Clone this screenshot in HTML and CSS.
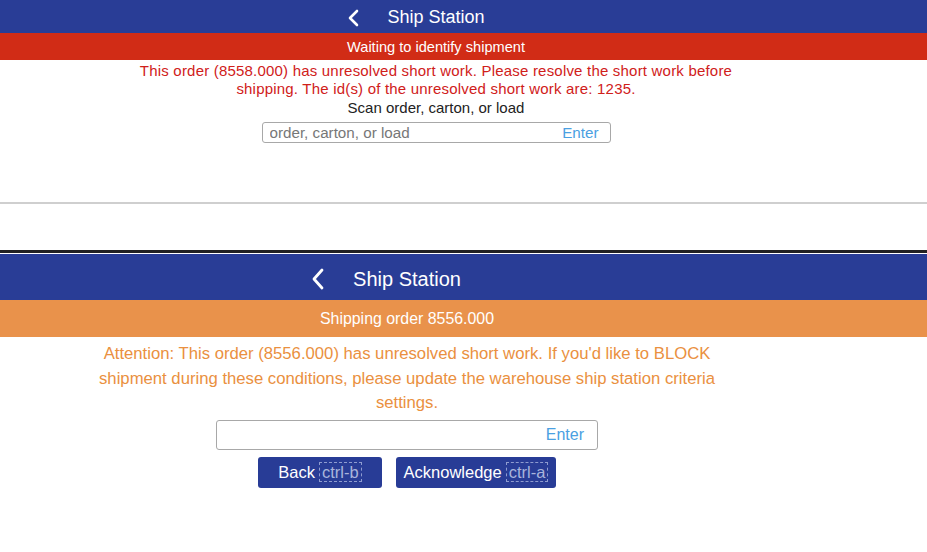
FILE: index.html
```html
<!DOCTYPE html>
<html lang="en">
<head>
  <meta charset="UTF-8" />
  <meta name="viewport" content="width=device-width, initial-scale=1.0"/>
  <title>Ship Station</title>
  <link rel="stylesheet" href="styles.css">
</head>
<body>
  <!-- top: waiting for scan, blocked -->
  <section class="panel panel-top">
    <header class="bar header">
      <div class="title">
        <svg class="back-arrow" width="14" height="18" viewBox="0 0 14 18"><polyline points="11,2 4,9 11,16" fill="none" stroke="#fff" stroke-width="2.6" stroke-linecap="round" stroke-linejoin="round"/></svg>
        Ship Station
      </div>
    </header>
    <div class="bar status status-red">Waiting to identify shipment</div>
    <div class="content">
      <p class="message msg-red">This order (8558.000) has unresolved short work. Please resolve the short work before shipping. The id(s) of the unresolved short work are: 1235.</p>
      <div class="label">Scan order, carton, or load</div>
      <div class="scan-box">
        <input type="text" placeholder="order, carton, or load">
        <span class="enter">Enter</span>
      </div>
    </div>
    <div class="footer-line"></div>
  </section>

  <div class="divider"></div>

  <!-- bottom: shipping with warning -->
  <section class="panel panel-bottom">
    <header class="bar header">
      <div class="title">
        <svg class="back-arrow" width="15" height="22" viewBox="0 0 15 22"><polyline points="12,2 4,11 12,20" fill="none" stroke="#fff" stroke-width="2.8" stroke-linecap="round" stroke-linejoin="round"/></svg>
        Ship Station
      </div>
    </header>
    <div class="bar status status-orange">Shipping order 8556.000</div>
    <div class="content">
      <p class="message msg-orange">Attention: This order (8556.000) has unresolved short work. If you'd like to BLOCK shipment during these conditions, please update the warehouse ship station criteria settings.</p>
      <div class="scan-box">
        <input type="text">
        <span class="enter">Enter</span>
      </div>
      <div class="actions">
        <button class="btn btn-back">Back <span class="key">ctrl-b</span></button>
        <button class="btn btn-ack">Acknowledge <span class="key">ctrl-a</span></button>
      </div>
    </div>
  </section>
</body>
</html>
```

FILE: styles.css
```css
body {
  margin: 0;
  font-family: "Liberation Sans", Arial, sans-serif;
  background: #fff;
  overflow: hidden;
}
.panel-top {
  height: 250px;
  position: relative;
}
.panel-top .bar,
.panel-top .content { padding-right: 55px; }
.panel-bottom .bar,
.panel-bottom .content { padding-right: 113px; }

.bar {
  display: flex;
  justify-content: center;
  align-items: center;
  color: #fff;
}
.header { background: #293d96; }
.title { position: relative; }
.back-arrow { position: absolute; top: 50%; transform: translateY(-50%); }

.panel-top .header { height: 33px; }
.panel-top .title { font-size: 18px; top: 1px; }
.panel-top .back-arrow { left: -41px; }
.panel-top .status { height: 27px; font-size: 14.6px; }

.panel-bottom .header { height: 46px; }
.panel-bottom .title { font-size: 20px; top: 2px; }
.panel-bottom .back-arrow { left: -43px; }
.panel-bottom .status { height: 37px; font-size: 15.9px; }

.status-red { background: #d12c16; }
.status-orange { background: #e9924b; }

.content {
  display: flex;
  flex-direction: column;
  align-items: center;
}
.message {
  margin: 0;
  text-align: center;
}
.msg-red {
  color: #d0201a;
  font-size: 15px;
  letter-spacing: 0.2px;
  line-height: 18px;
  width: 600px;
  margin-top: 2px;
}
.msg-orange {
  color: #ea9040;
  font-size: 16.7px;
  line-height: 24.5px;
  width: 640px;
  margin-top: 5px;
}
.label {
  font-size: 15px;
  line-height: 18px;
  color: #222;
  margin-top: 1px;
}
.scan-box {
  display: flex;
  align-items: center;
  border: 1px solid #a8a8a8;
  border-radius: 3px;
  box-sizing: border-box;
  background: #fff;
}
.scan-box input {
  flex: 1;
  min-width: 0;
  border: none;
  outline: none;
  background: transparent;
  font-family: inherit;
  padding: 0;
  color: #333;
}
.scan-box input::placeholder { color: #777; }
.enter { color: #4aa0e2; }

.panel-top .scan-box {
  width: 349px;
  height: 21px;
  margin-top: 5px;
  padding: 0 11px 0 7px;
}
.panel-top .scan-box input,
.panel-top .enter { font-size: 15.2px; }

.panel-bottom .scan-box {
  width: 382px;
  height: 30px;
  margin-top: 4px;
  padding: 0 13px 0 8px;
}
.panel-bottom .enter { font-size: 16px; }

.footer-line {
  position: absolute;
  left: 0;
  right: 0;
  top: 202px;
  height: 2px;
  background: #cfcfcf;
}
.divider {
  height: 3px;
  background: #222;
  border-bottom: 1px solid #fff;
}

.actions {
  display: flex;
  gap: 14px;
  margin-top: 7px;
}
.btn {
  height: 31px;
  background: #283c96;
  color: #fff;
  border: none;
  border-radius: 3px;
  font-family: inherit;
  font-size: 16.5px;
  padding: 0;
  display: flex;
  align-items: center;
  justify-content: center;
}
.btn-back { width: 124px; }
.btn-ack { width: 160px; }
.key {
  color: #a9b4dc;
  border: 1px dashed #8f9cd0;
  padding: 0 2px;
  margin-left: 4px;
  line-height: 18px;
}
```
